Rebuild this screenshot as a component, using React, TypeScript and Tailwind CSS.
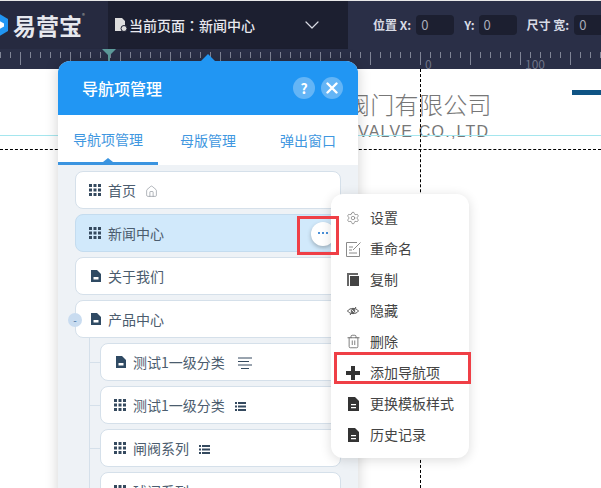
import { ChevronDown, Settings, Trash2, Home } from 'lucide-react'

const font = { fontFamily: '"Noto Sans CJK SC", "Liberation Sans", sans-serif' }

function Grip({ className = 'text-[#34495e]' }: { className?: string }) {
  return (
    <svg className={`w-3 h-3 shrink-0 ${className}`} viewBox="0 0 12 12" fill="currentColor">
      {[0, 4.5, 9].map((y) => [0, 4.5, 9].map((x) => <rect key={`${x}-${y}`} x={x} y={y} width="3" height="3" />))}
    </svg>
  )
}

function PageIcon({ className = 'text-[#2f4a63]' }: { className?: string }) {
  return (
    <svg className={`w-2.5 h-3 ml-[2px] shrink-0 ${className}`} viewBox="0 0 10 12" fill="currentColor">
      <path d="M0 0h6l4 4v8H0z" />
      <path d="M2.500 7h5v2.500h-5z" fill="#fff" />
    </svg>
  )
}

function ListIcon() {
  return (
    <svg className="w-[11px] h-[9px] shrink-0 ml-[3px] mt-[3px] text-[#34495e]" viewBox="0 0 11 9" fill="currentColor">
      {[0, 3.5, 7].map((y) => (
        <g key={y}>
          <rect x="0" y={y} width="2" height="2" />
          <rect x="3" y={y} width="8" height="2" />
        </g>
      ))}
    </svg>
  )
}

function Ruler() {
  const ticks = Array.from({ length: 61 }, (_, i) => i * 10)
  return (
    <svg className="absolute left-0 top-0" width="601" height="20" viewBox="0 0 601 20">
      {ticks.map((x) => (
        <line key={x} x1={x + 0.5} x2={x + 0.5} y1="3" y2={(x + 30) % 50 === 0 ? 16 : 9} stroke="#7f8496" strokeWidth="1" />
      ))}
    </svg>
  )
}

function Row({ children, active, indent, dash }: { children: React.ReactNode; active?: boolean; indent?: boolean; dash?: boolean }) {
  return (
    <div className={`relative h-[38px] shrink-0 flex items-center pl-[13px] gap-[7px] rounded-lg border text-[14px] text-[#4b5c6e] ${indent ? 'ml-[25px]' : ''} ${active ? 'bg-[#d1e9fb] border-[#c4dcef]' : 'bg-white border-[#d5e0ea]'}`}>
      {dash && <div className="absolute left-[-11px] top-[18px] w-[11px] h-px bg-[#d5e0ea]" />}
      {children}
    </div>
  )
}

function MenuItem({ icon, label }: { icon: React.ReactNode; label: string }) {
  return (
    <div className="h-[31px] flex items-center text-[14px] text-[#444]">
      <div className="w-[39px] pl-[15px] flex items-center">{icon}</div>
      <span>{label}</span>
    </div>
  )
}

function FileDark() {
  return (
    <svg className="w-[11px] h-[14px] ml-[2px]" viewBox="0 0 11 14" fill="#333">
      <path d="M0 0h7l4 4v10H0z" />
      <path d="M3 7h5v1.200H3zM3 10h5v1.200H3z" fill="#fff" />
    </svg>
  )
}

export default function App() {
  return (
    <div className="relative w-[601px] h-[488px] overflow-hidden bg-white" style={font}>
      <div className="h-px bg-[#e8e8e8]" />
      {/* top bar */}
      <div className="h-12 flex text-white">
        <div className="w-[108px] shrink-0 bg-[#262a40] flex items-center overflow-hidden">
          <svg className="w-[22px] h-[24px] ml-[-13px] shrink-0" viewBox="0 0 22 24">
            <path d="M11 0l10 6v12l-10 6-10-6V6z" fill="#2196f3" />
            <path d="M11 7l6 3.500v3L11 17l-6-3.500v-3z" fill="#fff" />
          </svg>
          <span className="ml-[4px] text-[23px] font-bold text-[#e6e8ee]">易营宝</span>
          <span className="text-[6px] self-start mt-[10px] text-[#aaa]">®</span>
        </div>
        <div className="w-[240px] shrink-0 bg-[#1c1f30] flex items-center pl-[7px]">
          <svg className="w-3 h-[14px] shrink-0" viewBox="0 0 12 14" fill="#ddd">
            <path d="M0 0h7l3 3v5H7v5H0z" />
            <circle cx="9" cy="10.500" r="3" fill="#ddd" stroke="#1c1f30" />
          </svg>
          <span className="text-[14px] font-medium ml-[2px] text-[#e8e8ee] whitespace-nowrap">
            当前页面<span className="font-['Noto_Sans_CJK_TC',sans-serif]">：</span>新闻中心
          </span>
          <ChevronDown className="w-[24px] h-[24px] ml-[45px] text-[#d8dae2] shrink-0" strokeWidth={1.200} />
        </div>
        <div className="flex-1 bg-[#2a2f47] flex items-center pl-[25px] text-[12px] font-bold text-[#d8dbe5] whitespace-nowrap overflow-hidden">
          <span>位置 X:</span>
          <div className="ml-[5px] w-[38px] h-5 shrink-0 rounded bg-[#1c1f30] pl-[5px] flex items-center text-[13px] font-normal text-[#a8acb8]">0</div>
          <span className="ml-[10px]">Y:</span>
          <div className="ml-[4px] w-[38px] h-5 shrink-0 rounded bg-[#1c1f30] pl-[5px] flex items-center text-[13px] font-normal text-[#a8acb8]">0</div>
          <span className="ml-[10px]">尺寸 宽:</span>
          <div className="ml-[5px] w-[38px] h-5 shrink-0 rounded bg-[#1c1f30] pl-[5px] flex items-center text-[13px] font-normal text-[#a8acb8]">0</div>
        </div>
      </div>
      {/* ruler */}
      <div className="relative h-5 bg-[#2a2f47]">
        <Ruler />
        <span className="absolute left-[425px] top-[9px] text-[12px] leading-[11px] text-[#6f7488]">0</span>
        <span className="absolute left-[525px] top-[9px] text-[12px] leading-[11px] text-[#6f7488]">100</span>
        <svg className="absolute left-[102px] top-0" width="14" height="12" viewBox="0 0 14 12">
          <path d="M0 0h14l-6 6v6H6V6z" fill="#5d9b9b" />
        </svg>
      </div>
      {/* canvas */}
      <div className="absolute left-[346px] top-[87px] text-[24px] tracking-[0.3px] leading-[34px] font-light text-[#777] whitespace-nowrap">阀门有限公司</div>
      <div className="absolute left-[358px] top-[122px] text-[16px] leading-5 text-[#777] tracking-[1.200px] whitespace-nowrap" style={{ fontFamily: '"Liberation Sans", sans-serif' }}>VALVE CO.,LTD</div>
      <div className="absolute left-[572px] top-[90px] w-[29px] h-[5px] bg-[#0f5484]" />
      <div className="absolute left-0 right-0 top-[135px] h-px bg-[#a5e6ee]" />
      <div className="absolute left-0 right-0 top-[149px] border-t border-dashed border-black" />
      <div className="absolute left-[420px] top-[69px] bottom-0 border-l border-dashed border-black" />

      {/* nav panel */}
      <div className="absolute left-[58px] top-[61px] w-[300px] h-[440px] flex flex-col rounded-t-xl bg-[#eef2f6] shadow-[0_0_14px_rgba(0,0,0,0.18)]">
        <div className="absolute left-[143px] top-[-7px] w-0 h-0 border-x-[7px] border-x-transparent border-b-[7px] border-b-[#2196f3]" />
        <div className="h-[54px] shrink-0 bg-[#2196f3] rounded-t-xl flex items-center pl-[24px] pr-[15px] text-white">
          <span className="text-[16px] font-medium">导航项管理</span>
          <div className="ml-auto w-[22px] h-[22px] rounded-full bg-[#64b5f6] flex items-center justify-center text-[14px] font-bold">?</div>
          <div className="ml-[6px] w-[22px] h-[22px] rounded-full bg-[#64b5f6] flex items-center justify-center">
            <svg className="w-3 h-3" viewBox="0 0 12 12" stroke="#fff" strokeWidth="2.400" strokeLinecap="round">
              <path d="M1.500 1.500l9 9M10.500 1.500l-9 9" />
            </svg>
          </div>
        </div>
        <div className="h-[50px] shrink-0 bg-white flex text-[14px] text-[#3f97e0]">
          <div className="relative w-[100px] flex items-center justify-center border-b-[3px] border-[#3a94e0] pt-[1px]">
            导航项管理
            <div className="absolute left-[45px] bottom-0 w-0 h-0 border-x-[5px] border-x-transparent border-b-[4px] border-b-[#3a94e0]" />
          </div>
          <div className="w-[100px] flex items-center justify-center">母版管理</div>
          <div className="w-[100px] flex items-center justify-center">弹出窗口</div>
        </div>
        <div className="relative flex-1 pl-[17px] pr-[17px] pt-[6px] flex flex-col gap-[5px]">
          <div className="absolute left-[31px] top-[173px] bottom-0 w-px bg-[#d5e0ea]" />
          <Row>
            <Grip />
            <span>首页</span>
            <Home className="w-[13px] h-[13px] ml-[2px] mt-[2px] text-[#8a9098]" strokeWidth={1.200} />
          </Row>
          <Row active>
            <Grip />
            <span>新闻中心</span>
          </Row>
          <Row>
            <PageIcon />
            <span>关于我们</span>
          </Row>
          <Row>
            <div className="absolute left-[-8px] top-[12px] w-[14px] h-[14px] rounded-full bg-[#c9dcf0] text-[#3f6d9e] flex items-center justify-center text-[10px] leading-none">-</div>
            <PageIcon />
            <span>产品中心</span>
          </Row>
          <Row indent dash>
            <PageIcon />
            <span>测试1一级分类</span>
            <svg className="w-[15px] h-3 ml-[6px] mt-[2px]" viewBox="0 0 15 12" stroke="#34495e" strokeWidth="1">
              <path d="M0 1h14M0 4.500h11M0 8h14M3 11.500h8" />
            </svg>
          </Row>
          <Row indent dash>
            <Grip />
            <span>测试1一级分类</span>
            <ListIcon />
          </Row>
          <Row indent dash>
            <Grip />
            <span>闸阀系列</span>
            <ListIcon />
          </Row>
          <Row indent dash>
            <Grip />
            <span>球阀系列</span>
            <ListIcon />
          </Row>
        </div>
      </div>

      {/* more button on the active row */}
      <div className="absolute left-[311px] top-[222px] w-[24px] h-[24px] rounded-full bg-white shadow-[0_2px_4px_rgba(0,0,0,0.25)]" />
      <div className="absolute left-[318px] top-[232px] flex gap-[2px]">
        <i className="w-[2px] h-[2px] bg-[#4a90d9]" />
        <i className="w-[2px] h-[2px] bg-[#4a90d9]" />
        <i className="w-[2px] h-[2px] bg-[#4a90d9]" />
      </div>

      {/* context menu */}
      <div className="absolute left-[331px] top-[194px] w-[138px] h-[264px] rounded-xl bg-white pt-[8px] shadow-[0_2px_12px_rgba(0,0,0,0.14)]">
        <MenuItem label="设置" icon={<Settings className="w-[14px] h-[14px] text-[#777]" strokeWidth={1.200} />} />
        <MenuItem
          label="重命名"
          icon={
            <svg className="w-[16px] h-[16px]" viewBox="0 0 16 16" fill="none" stroke="#8a8a8a" strokeWidth="1">
              <path d="M11 1.500H.5v14h13V7" />
              <path d="M7 9l7.500-7.500M3 6h4M3 9h3M3 12h8" />
            </svg>
          }
        />
        <MenuItem
          label="复制"
          icon={
            <svg className="w-[12px] h-[13px] ml-[1px]" viewBox="0 0 12 13">
              <path d="M0 0h11v2H2v11H0z" fill="#666" />
              <path d="M3 3h9v10H3z" fill="#444" />
            </svg>
          }
        />
        <MenuItem
          label="隐藏"
          icon={
            <svg className="w-[12px] h-[10px] ml-[1px]" viewBox="0 0 12 10" fill="none" stroke="#555" strokeWidth="1">
              <path d="M.5 5C3 1.500 9 1.500 11.500 5 9 8.500 3 8.500.5 5z" />
              <circle cx="6" cy="5" r="1.800" />
              <path d="M9 1L3 9" />
            </svg>
          }
        />
        <MenuItem label="删除" icon={<Trash2 className="w-[15px] h-[15px] text-[#555]" strokeWidth={1.200} />} />
        <MenuItem
          label="添加导航项"
          icon={
            <svg className="w-[14px] h-[14px]" viewBox="0 0 14 14" fill="#333">
              <path d="M5 0h4v5h5v4H9v5H5V9H0V5h5z" />
            </svg>
          }
        />
        <MenuItem label="更换模板样式" icon={<FileDark />} />
        <MenuItem label="历史记录" icon={<FileDark />} />
      </div>

      {/* red highlight boxes */}
      <div className="absolute left-[297px] top-[216px] w-[42px] h-[39px] border-[3px] border-[#ef3f46]" />
      <div className="absolute left-[334px] top-[352px] w-[137px] h-[32px] border-[3px] border-[#ef3f46]" />
    </div>
  )
}
